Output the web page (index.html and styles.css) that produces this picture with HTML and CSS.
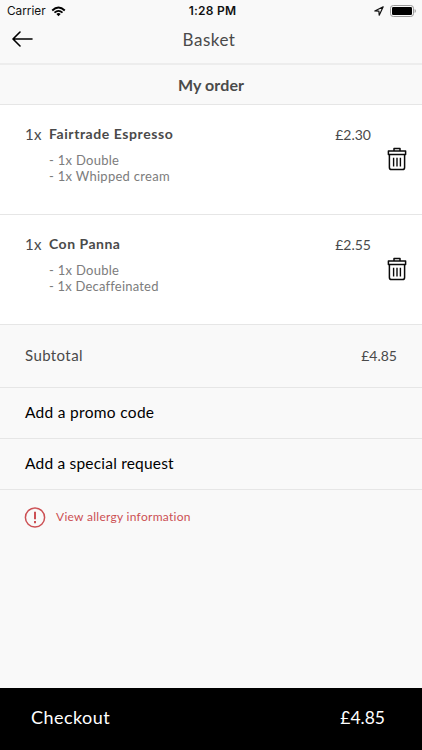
FILE: index.html
```html
<!DOCTYPE html>
<html lang="en">
<head>
<meta charset="utf-8">
<title>Basket</title>
<link rel="stylesheet" href="styles.css">
</head>
<body>
<svg width="0" height="0" class="defs" aria-hidden="true">
  <symbol id="trash" viewBox="0 0 20 24">
    <g fill="none" stroke="#0a0a0a" stroke-width="1.5" stroke-linejoin="round">
      <path d="M7 4V1.4h6V4"/>
      <path d="M1.4 4.1h17.2v3.3H1.4z"/>
      <path d="M2.4 7.4v13q0 2.2 2.2 2.2h10.8q2.2 0 2.2-2.2v-13"/>
      <path d="M6.6 10.8v8.6M10 10.8v8.6M13.4 10.8v8.6" stroke-width="1.4"/>
    </g>
  </symbol>
</svg>
<div class="app">
  <header class="header">
    <div class="status">
      <div class="status-left">
        <span class="carrier">Carrier</span>
        <svg class="wifi" width="15" height="11" viewBox="0 0 16 11">
          <path d="M1.3 4.4Q8-2 14.7 4.4" fill="none" stroke="#000" stroke-width="2"/>
          <path d="M3.7 6.8Q8 2.9 12.3 6.8" fill="none" stroke="#000" stroke-width="1.8"/>
          <path d="M5.7 8.2Q8 6.2 10.3 8.2L8 10.6z"/>
        </svg>
      </div>
      <span class="time">1:28 PM</span>
      <div class="status-right">
        <svg width="10" height="10" viewBox="0 0 10 10"><path d="M.8 5 9.2.8 5.2 9.2 4.9 5.1z" fill="none" stroke="#111" stroke-width="1.2" stroke-linejoin="round"/></svg>
        <svg width="26" height="12" viewBox="0 0 26 12"><rect x=".5" y=".5" width="23" height="11" rx="2.8" fill="none" stroke="#999"/><rect x="2" y="2" width="20" height="8" rx="1.3"/><path d="M24.6 4v4q1.3-.6 1.3-2t-1.3-2" fill="#999"/></svg>
      </div>
    </div>
    <div class="nav">
      <svg class="back" width="21" height="16" viewBox="0 0 21 16"><path d="M8 1 1 8l7 7M1.3 8H20" fill="none" stroke="#000" stroke-width="1.6" stroke-linecap="round" stroke-linejoin="round"/></svg>
      <h1 class="title">Basket</h1>
    </div>
  </header>
  <h2 class="section">My order</h2>
  <article class="item">
    <span class="qty">1x</span>
    <div class="details">
      <h3 class="name espresso">Fairtrade Espresso</h3>
      <p class="option">- 1x Double</p>
      <p class="option">- 1x Whipped cream</p>
    </div>
    <span class="price">£2.30</span>
    <svg class="trash" width="20" height="24"><use href="#trash"/></svg>
  </article>
  <article class="item">
    <span class="qty">1x</span>
    <div class="details">
      <h3 class="name">Con Panna</h3>
      <p class="option">- 1x Double</p>
      <p class="option decaf">- 1x Decaffeinated</p>
    </div>
    <span class="price">£2.55</span>
    <svg class="trash" width="20" height="24"><use href="#trash"/></svg>
  </article>
  <div class="subtotal"><span>Subtotal</span><span class="amount">£4.85</span></div>
  <div class="action promo">Add a promo code</div>
  <div class="action">Add a special request</div>
  <div class="allergy">
    <svg width="22" height="22" viewBox="0 0 22 22"><circle cx="11" cy="11.5" r="9.6" fill="none" stroke="#cc5054" stroke-width="1.5"/><path d="M11 5.8v7.4M11 14.9v2.3" stroke="#cc5054" stroke-width="2"/></svg>
    <span class="allergy-text">View allergy information</span>
  </div>
  <footer class="checkout"><span>Checkout</span><span class="total">£4.85</span></footer>
</div>
</body>
</html>
```
FILE: styles.css
```css
* { box-sizing: border-box; }
body { margin: 0; font-family: Lato, "Liberation Sans", sans-serif; color: #4a4a4a; background: #f9f9f9; }
h1, h2, h3, p { margin: 0; font-weight: 400; }
svg { display: block; flex: none; }
.defs { display: none; }
.app { height: 750px; display: flex; flex-direction: column; white-space: nowrap; overflow: hidden; }
.header { height: 65px; border-bottom: 2px solid #ededed; flex: none; }
.status { height: 22px; display: grid; grid-template-columns: 1fr auto 1fr; align-items: center; padding: 0 6px 0 7px; font-family: Inter, sans-serif; font-size: 12px; line-height: 22px; color: #111; }
.status-left { display: flex; align-items: center; gap: 5px; }
.carrier { font-size: 11.8px; }
.time { font-weight: 600; letter-spacing: .25px; padding-left: 2px; }
.status-right { display: flex; align-items: center; justify-content: flex-end; gap: 6px; }
.nav { display: grid; grid-template-columns: 1fr auto 1fr; align-items: center; height: 34px; }
.back { margin-left: 12px; }
.title { font-size: 17px; letter-spacing: .5px; padding-right: 4px; }
.section { height: 40px; border-bottom: 1px solid #e6e6e6; flex: none; text-align: center; font-size: 16px; font-weight: 700; line-height: 40px; letter-spacing: .1px; }
.item { height: 110px; border-bottom: 1px solid #e6e6e6; background: #fff; flex: none; display: grid; grid-template-columns: 24px 1fr auto 20px; padding: 20px 15px 0 25px; }
.qty { font-size: 15px; line-height: 19px; letter-spacing: .2px; }
.name { font-size: 14px; font-weight: 700; line-height: 18px; letter-spacing: .5px; }
.espresso { letter-spacing: .57px; }
.details { display: flow-root; }
.name + .option { margin-top: 9px; }
.option { font-size: 13px; line-height: 16px; color: #7c7c7c; letter-spacing: .28px; }
.decaf { letter-spacing: .2px; }
.price { font-size: 14px; line-height: 19px; margin-right: 16px; }
.trash { margin-top: 22px; }
.subtotal { height: 63px; border-bottom: 1px solid #e6e6e6; flex: none; display: flex; justify-content: space-between; align-items: center; padding: 0 25px 2px; font-size: 15px; letter-spacing: .4px; }
.amount { font-size: 14px; letter-spacing: 0; }
.action { height: 51px; border-bottom: 1px solid #e6e6e6; flex: none; line-height: 48px; padding-left: 25px; font-size: 15.5px; color: #000; letter-spacing: .2px; }
.promo { letter-spacing: .3px; }
.allergy { display: flex; align-items: center; gap: 10px; padding: 16px 24px; color: #cc5054; font-size: 12px; letter-spacing: .28px; }
.allergy-text { padding-bottom: 2px; }
.checkout { height: 62px; margin-top: auto; background: #000; color: #fff; display: flex; justify-content: space-between; align-items: center; padding: 0 37px 4px 31px; font-size: 18px; letter-spacing: .45px; }
.total { font-size: 17.5px; letter-spacing: 0; }
```
